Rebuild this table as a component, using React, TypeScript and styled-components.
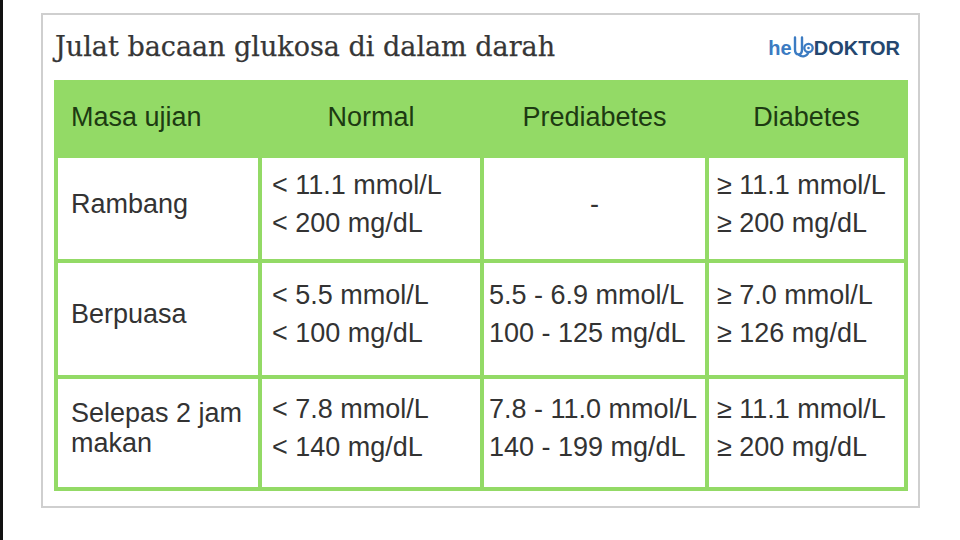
import React from "react";
import styled, { createGlobalStyle } from "styled-components";

const Global = createGlobalStyle`
  html, body { margin: 0; padding: 0; background: #ffffff; }
  body { width: 960px; height: 540px; overflow: hidden; }
`;

const GREEN = "#93da66";

const Page = styled.div`
  width: 960px;
  height: 540px;
  box-sizing: border-box;
  border-left: 3px solid #111;
  padding: 13px 0 0 38px;
  background: #fff;
`;

const Card = styled.div`
  width: 879px;
  height: 495px;
  box-sizing: border-box;
  border: 2px solid #cfcfcf;
  padding: 0 10px 0 11px;
  background: #fff;
  display: flex;
  flex-direction: column;
`;

const TitleBar = styled.div`
  height: 63px;
  display: flex;
  align-items: center;
  justify-content: space-between;
  padding: 0 8px 2px 1px;
`;

const Title = styled.h1`
  margin: 0;
  font-family: "DejaVu Serif", "Liberation Serif", serif;
  font-weight: normal;
  font-size: 27px;
  color: #363636;
  -webkit-text-stroke: 0.25px #363636;
`;

const Logo = styled.div`
  display: flex;
  align-items: flex-end;
  font-family: "Liberation Sans", Arial, sans-serif;
  font-weight: bold;
  font-size: 20px;
  line-height: 1;
`;

const LogoHello = styled.span`
  color: #3b7bc2;
`;

const LogoDoktor = styled.span`
  color: #24476f;
`;

const Table = styled.div`
  display: grid;
  grid-template-columns: 200px 218px 221px 195px;
  grid-template-rows: 70px 101px 112px 108px;
  gap: 4px;
  padding: 4px;
  background: ${GREEN};
  width: 854px;
  box-sizing: border-box;
  font-family: "Liberation Sans", Arial, sans-serif;
  font-size: 27px;
`;

const HeadCell = styled.div<{ $left?: boolean }>`
  background: ${GREEN};
  color: #1d3a12;
  display: flex;
  align-items: center;
  justify-content: ${(p) => (p.$left ? "flex-start" : "center")};
  padding-left: ${(p) => (p.$left ? "13px" : "0")};
  padding-bottom: 4px;
`;

const LabelCell = styled.div`
  background: #fff;
  color: #333;
  display: flex;
  align-items: center;
  padding: 0 8px 10px 13px;
  line-height: 30px;
`;

const ValueCell = styled.div<{ $pad?: number; $center?: boolean }>`
  background: #fff;
  color: #333;
  display: flex;
  flex-direction: column;
  justify-content: center;
  align-items: ${(p) => (p.$center ? "center" : "flex-start")};
  padding: 0 0 10px ${(p) => (p.$center ? 0 : p.$pad ?? 10)}px;
  line-height: 38px;
  white-space: nowrap;
`;

const Stetho = () => (
  <svg width="22" height="22" viewBox="0 0 22 22">
    <path
      d="M3 1.5 V13.5 C3 20 10 20 10 13.5 V1.5"
      fill="none"
      stroke="#3b7bc2"
      strokeWidth="2.4"
      strokeLinecap="round"
    />
    <path d="M6.5 18.6 C10 21.5 15.5 20.5 16.3 16.3" fill="none" stroke="#3b7bc2" strokeWidth="2.2" />
    <circle cx="16.5" cy="12" r="4.2" fill="none" stroke="#3b7bc2" strokeWidth="2.3" />
    <circle cx="16.5" cy="12" r="1.3" fill="#3b7bc2" />
  </svg>
);

type Row = { label: string; values: (string[] | null)[] };

const rows: Row[] = [
  {
    label: "Rambang",
    values: [["< 11.1 mmol/L", "< 200 mg/dL"], null, ["≥ 11.1 mmol/L", "≥ 200 mg/dL"]],
  },
  {
    label: "Berpuasa",
    values: [
      ["< 5.5 mmol/L", "< 100 mg/dL"],
      ["5.5 - 6.9 mmol/L", "100 - 125 mg/dL"],
      ["≥ 7.0 mmol/L", "≥ 126 mg/dL"],
    ],
  },
  {
    label: "Selepas 2 jam makan",
    values: [
      ["< 7.8 mmol/L", "< 140 mg/dL"],
      ["7.8 - 11.0 mmol/L", "140 - 199 mg/dL"],
      ["≥ 11.1 mmol/L", "≥ 200 mg/dL"],
    ],
  },
];

const pads = [10, 5, 8];

export default function App() {
  return (
    <>
      <Global />
      <Page>
        <Card>
          <TitleBar>
            <Title>Julat bacaan glukosa di dalam darah</Title>
            <Logo>
              <LogoHello>he</LogoHello>
              <Stetho />
              <LogoDoktor>DOKTOR</LogoDoktor>
            </Logo>
          </TitleBar>
          <Table>
            <HeadCell $left>Masa ujian</HeadCell>
            <HeadCell>Normal</HeadCell>
            <HeadCell>Prediabetes</HeadCell>
            <HeadCell>Diabetes</HeadCell>
            {rows.map((r) => (
              <React.Fragment key={r.label}>
                <LabelCell>{r.label}</LabelCell>
                {r.values.map((v, i) =>
                  v ? (
                    <ValueCell key={i} $pad={pads[i]}>
                      {v.map((line) => (
                        <span key={line}>{line}</span>
                      ))}
                    </ValueCell>
                  ) : (
                    <ValueCell key={i} $center>
                      <span>-</span>
                    </ValueCell>
                  )
                )}
              </React.Fragment>
            ))}
          </Table>
        </Card>
      </Page>
    </>
  );
}
